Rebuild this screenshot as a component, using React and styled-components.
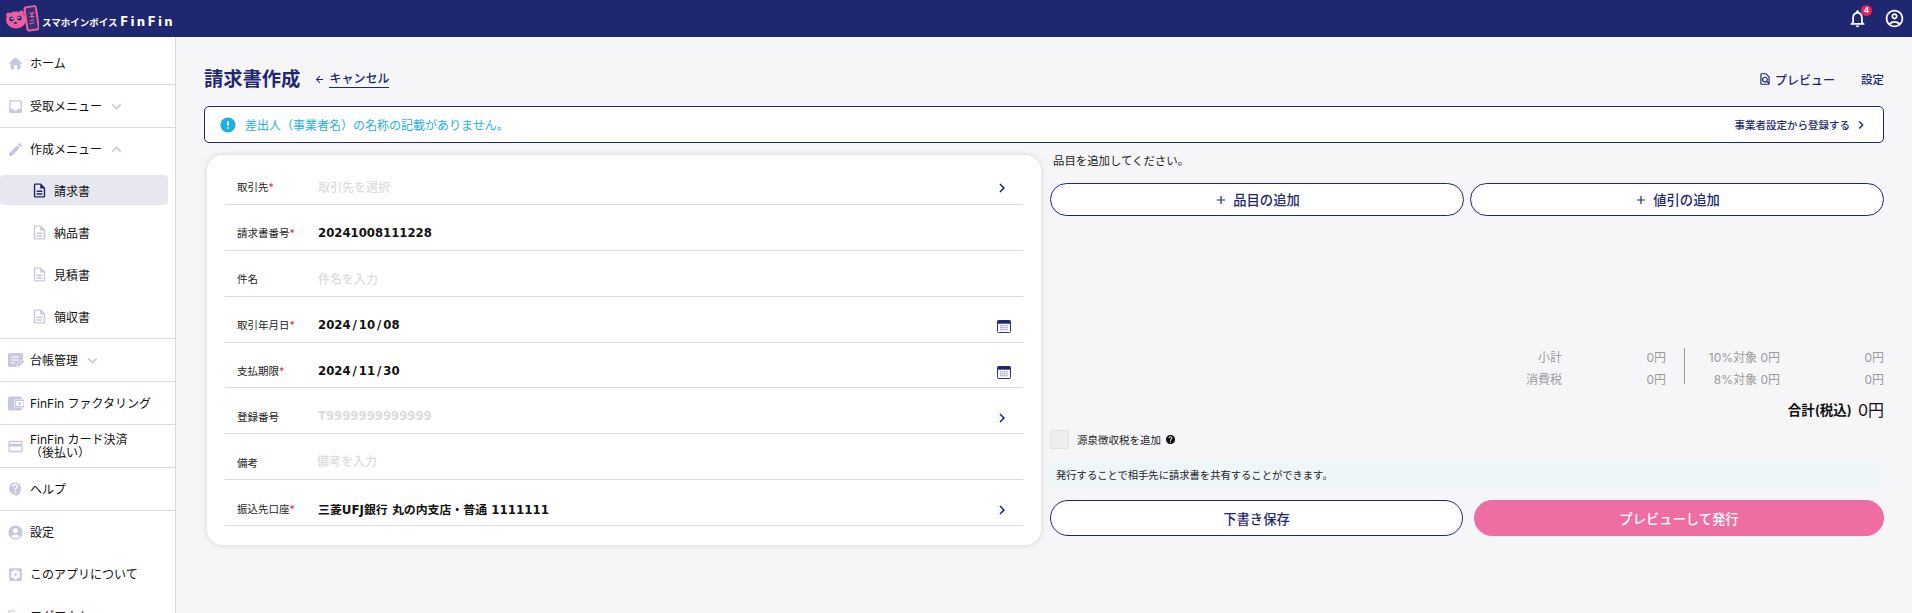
import styled, { createGlobalStyle } from "styled-components";
import {
  MdHome,
  MdInbox,
  MdEdit,
  MdOutlineDescription,
  MdCreditCard,
  MdHelp,
  MdContactSupport,
  MdAccountCircle,
  MdSettingsApplications,
  MdLogout,
  MdNotificationsNone,
  MdOutlineAccountCircle,
  MdKeyboardArrowDown,
  MdKeyboardArrowUp,
  MdChevronRight,
  MdArrowBack,
  MdError,
  MdOutlineFindInPage,
  MdAdd,
} from "react-icons/md";

const GlobalStyle = createGlobalStyle`
  html, body {
    margin: 0;
    height: 100%;
    overflow: hidden;
    background: #f6f6f9;
    font-family: Inter, "Noto Sans CJK JP", sans-serif;
    color: #111;
  }
  * { box-sizing: border-box; }
`;

const Page = styled.div`
  width: 1912px;
  height: 613px;
  overflow: hidden;
  display: flex;
  flex-direction: column;
`;

const TopBar = styled.header`
  height: 37px;
  flex: none;
  background: #1e2770;
  display: flex;
  align-items: center;
  justify-content: space-between;
  padding: 0 7px 0 6px;
  color: #fff;
`;

const Brand = styled.div`
  display: flex;
  align-items: center;
`;

const BrandKana = styled.span`
  font-size: 9.5px;
  font-weight: 700;
  margin: 6px 0 0 3px;
  letter-spacing: 0;
`;

const BrandName = styled.span`
  font-size: 12.5px;
  font-weight: 800;
  letter-spacing: 2.9px;
  margin: 6px 0 0 3px;
`;

const TopIcons = styled.div`
  display: flex;
  align-items: center;
  gap: 14px;
  font-size: 21px;
`;

const Bell = styled.div`
  position: relative;
  display: flex;
  margin-right: 2px;
`;

const BellBadge = styled.span`
  position: absolute;
  top: -3px;
  right: -4px;
  width: 11px;
  height: 11px;
  border-radius: 50%;
  background: #f01d55;
  font-size: 8px;
  font-weight: 700;
  line-height: 11px;
  text-align: center;
`;

const Body = styled.div`
  flex: 1;
  display: flex;
  min-height: 0;
`;

const Sidebar = styled.nav`
  width: 176px;
  flex: none;
  background: #fff;
  border-right: 1px solid #d9d9de;
  padding-top: 5px;
`;

const MenuRow = styled.div`
  height: ${(p) => (p.$divider ? 43 : 42)}px;
  display: flex;
  align-items: center;
  padding-left: 7px;
  gap: 6px;
  font-size: 12px;
  line-height: 13px;
  border-bottom: ${(p) => (p.$divider ? "1px solid #dcdce0" : "none")};
  color: #111;

  svg {
    color: #c6c8de;
    font-size: 17px;
    flex: none;
  }
`;

const Caret = styled.span`
  display: flex;
  margin-left: -1px;

  svg {
    font-size: 19px;
  }
`;

const SubRow = styled.div`
  height: 42px;
  padding: 5px 7px 7px 0;
`;

const SubInner = styled.div`
  height: 30px;
  display: flex;
  align-items: center;
  padding-left: 31px;
  gap: 6px;
  font-size: 12px;
  border-radius: 4px;
  background: ${(p) => (p.$active ? "#e6e7f0" : "transparent")};

  svg {
    font-size: 17px;
    color: ${(p) => (p.$active ? "#1e2770" : "#c6c8de")};
    flex: none;
  }
`;

const SideRule = styled.div`
  border-bottom: 1px solid #dcdce0;
`;

const Main = styled.main`
  flex: 1;
  padding: 19px 28px 0 28px;
  min-width: 0;
`;

const Head = styled.div`
  display: flex;
  align-items: center;
  height: 46px;
  margin-bottom: 4px;
  color: #1e2770;
`;

const Title = styled.h1`
  margin: 0;
  font-size: 19.3px;
  font-weight: 700;
  line-height: 28px;
`;

const Cancel = styled.div`
  display: flex;
  align-items: center;
  margin-left: 14px;
  font-size: 12px;
  font-weight: 500;

  svg {
    font-size: 11px;
    margin-right: 4px;
  }

  span {
    border-bottom: 1px solid #1e2770;
    line-height: 17px;
  }
`;

const HeadActions = styled.div`
  margin-left: auto;
  display: flex;
  align-items: center;
  font-size: 11.5px;
  font-weight: 500;
  gap: 26px;
`;

const PreviewLink = styled.div`
  display: flex;
  align-items: center;
  gap: 3px;
  font-size: 12px;

  svg {
    font-size: 14px;
  }
`;

const Alert = styled.div`
  height: 37px;
  border: 1px solid #1e2770;
  border-radius: 5px;
  background: #fff;
  display: flex;
  align-items: center;
  padding: 0 14px 0 14px;
  font-size: 12px;
  color: #1fb0e0;
`;

const AlertIcon = styled(MdError)`
  font-size: 18px;
  margin-right: 8px;
`;

const AlertLink = styled.div`
  margin-left: auto;
  display: flex;
  align-items: center;
  color: #1e2770;
  font-size: 10.5px;
  font-weight: 500;
  gap: 3px;

  svg {
    font-size: 16px;
  }
`;

const Columns = styled.div`
  display: flex;
  margin-top: 12px;
`;

const Card = styled.section`
  width: 834px;
  margin-left: 3px;
  flex: none;
  height: 390px;
  background: #fff;
  border-radius: 16px;
  box-shadow: 0 0 6px rgba(0, 0, 0, 0.13);
  padding: 4px 18px 0;
`;

const FormRow = styled.div`
  height: 45.9px;
  display: flex;
  align-items: center;
  border-bottom: 1px solid #dcdcdc;
  padding: 11px 12px 0 12px;
`;

const FieldLabel = styled.div`
  width: 81px;
  flex: none;
  font-size: 10.5px;
  color: #222;

  em {
    color: #f01d3c;
    font-style: normal;
  }
`;

const FieldValue = styled.div`
  flex: 1;
  font-family: "DejaVu Sans", "Noto Sans CJK JP", sans-serif;
  font-size: ${(p) => (p.$text ? 11.9 : 11.7)}px;
  font-weight: 700;
  color: #111;
`;

const DateSlash = styled.span`
  margin: 0 2px;
`;

const FieldPlaceholder = styled.div`
  flex: 1;
  font-family: ${(p) => (p.$latin ? '"DejaVu Sans", sans-serif' : "inherit")};
  font-size: ${(p) => (p.$latin ? 11.7 : 12)}px;
  font-weight: ${(p) => (p.$latin ? 700 : 500)};
  color: #dcdcdc;
  margin: ${(p) => (p.$raised ? "-4px 0 0 -1px" : "0")};
`;

const FieldIcon = styled.span`
  display: flex;
  color: #1e2770;
  margin-top: 3px;

  svg {
    font-size: 18px;
  }
`;

const Side = styled.div`
  flex: 1;
  margin-left: 9px;
  min-width: 0;
`;

const Hint = styled.p`
  margin: 0 0 0 3px;
  font-size: 11.4px;
  line-height: 13px;
  color: #222;
`;

const ButtonRow = styled.div`
  display: flex;
  gap: ${(p) => p.$gap}px;
  margin-top: ${(p) => p.$top}px;
`;

const PillButton = styled.button`
  flex: ${(p) => p.$flex || 1};
  height: ${(p) => p.$h}px;
  border-radius: 18px;
  border: 1px solid ${(p) => (p.$pink ? "#ee6ea4" : "#1e2770")};
  background: ${(p) => (p.$pink ? "#ee6ea4" : "#fff")};
  color: ${(p) => (p.$pink ? "#fff" : "#1e2770")};
  font-family: inherit;
  font-size: 13.3px;
  font-weight: 500;
  display: flex;
  align-items: center;
  justify-content: center;
  gap: 5px;
  padding: 0;
  min-width: 0;

  svg {
    font-size: 14px;
  }
`;

const Summary = styled.div`
  display: flex;
  justify-content: flex-end;
  margin-top: 129px;
  font-size: 12px;
  color: #9a9a9a;
`;

const SummaryGrid = styled.div`
  display: grid;
  grid-template-columns: ${(p) => p.$cols};
  grid-auto-rows: 22px;
  align-items: center;
  text-align: right;
`;

const SummaryRule = styled.div`
  width: 1px;
  height: 36px;
  background: #9a9a9a;
  margin: 3px 0 0 18px;
`;

const Total = styled.div`
  display: flex;
  justify-content: flex-end;
  align-items: center;
  gap: 6px;
  height: 24px;
  margin-top: 8px;
  font-size: 13.5px;
  font-weight: 600;
  color: #111;

  span {
    font-size: 16px;
    font-weight: 400;
  }
`;

const CheckRow = styled.label`
  display: flex;
  align-items: center;
  margin-top: 9px;
  font-size: 10.5px;
  color: #222;
`;

const CheckBox = styled.span`
  width: 19px;
  height: 19px;
  background: #eeeeee;
  border: 1px solid #e2e2e2;
  border-radius: 2px;
  margin-right: 8px;
`;

const HelpDot = styled(MdHelp)`
  font-size: 11px;
  color: #111;
  margin-left: 4px;
`;

const InfoBox = styled.div`
  height: 25px;
  margin-top: 13px;
  background: #eff6fa;
  padding: 0 6px;
  display: flex;
  align-items: center;
  font-size: 10.3px;
  color: #222;
`;

function LedgerIcon() {
  return (
    <svg width="17" height="17" viewBox="0 0 17 17">
      <path d="M2.5 1h12a1.5 1.5 0 0 1 1.5 1.5V8l-6 7H2.5A1.5 1.5 0 0 1 1 13.5v-11A1.5 1.5 0 0 1 2.5 1z" fill="currentColor" />
      <path d="M4 5h8M4 8h8M4 11h4" stroke="#fff" strokeWidth="1.2" />
      <path d="M9.5 15.5l.5-2.5 5.5-5.5 2 2-5.5 5.5z" fill="currentColor" stroke="#fff" strokeWidth=".8" />
    </svg>
  );
}

function WalletIcon() {
  return (
    <svg width="17" height="17" viewBox="0 0 17 17">
      <path d="M2.5 1.5h11a1.5 1.5 0 0 1 1.5 1.5v1H9a2 2 0 0 0-2 2v5a2 2 0 0 0 2 2h6v1a1.5 1.5 0 0 1-1.5 1.5h-11A1.5 1.5 0 0 1 1 14V3a1.5 1.5 0 0 1 1.5-1.5z" fill="currentColor" />
      <path d="M8.5 5.2H17v6.6H8.5z" fill="none" stroke="currentColor" strokeWidth="1.4" />
      <rect x="11.2" y="7.2" width="2.6" height="2.6" fill="currentColor" />
    </svg>
  );
}

function CalendarIcon() {
  return (
    <svg width="14" height="13" viewBox="0 0 14 13">
      <rect x="0.5" y="0.5" width="13" height="12" rx="1" fill="#fff" stroke="#2c3480" />
      <rect x="0.5" y="0.5" width="13" height="3.2" fill="#1e2770" />
      <path d="M3 5.8h8M3 7.8h8M3 9.8h8" stroke="#7d82b4" strokeWidth="1.1" strokeDasharray="1.4 .7" />
    </svg>
  );
}

const menuAfter = [
  { icon: LedgerIcon, label: "台帳管理", caret: true },
  { icon: WalletIcon, label: "FinFin ファクタリング" },
  { icon: MdCreditCard, label: <>FinFin カード決済<br />（後払い）</> },
  { icon: MdContactSupport, label: "ヘルプ" },
];

const fields = [
  { label: "取引先", required: true, placeholder: "取引先を選択", icon: "chevron" },
  { label: "請求書番号", required: true, value: "20241008111228" },
  { label: "件名", placeholder: "件名を入力" },
  { label: "取引年月日", required: true, value: "2024/10/08", icon: "calendar" },
  { label: "支払期限", required: true, value: "2024/11/30", icon: "calendar" },
  { label: "登録番号", placeholder: "T9999999999999", latin: true, icon: "chevron" },
  { label: "備考", placeholder: "備考を入力", raised: true },
  { label: "振込先口座", required: true, value: "三菱UFJ銀行 丸の内支店・普通 1111111", text: true, icon: "chevron" },
];

function Logo() {
  return (
    <svg width="33" height="30" viewBox="0 0 33 30">
      <circle cx="2.5" cy="11" r="2.4" fill="#ee5f9d" />
      <circle cx="15.5" cy="9" r="2.4" fill="#ee5f9d" />
      <ellipse cx="10" cy="16" rx="10" ry="8.5" fill="#ee5f9d" />
      <ellipse cx="5.5" cy="15" rx="2.2" ry="2.6" fill="#1e2770" />
      <ellipse cx="13.5" cy="14" rx="2.2" ry="2.6" fill="#1e2770" />
      <circle cx="6" cy="14.6" r=".8" fill="#fff" />
      <circle cx="13" cy="13.6" r=".8" fill="#fff" />
      <ellipse cx="9.5" cy="19" rx="1.6" ry="1.1" fill="#1e2770" />
      <rect x="20" y="2.5" width="11.5" height="23.5" rx="2" fill="#3b2f78" stroke="#ee5f9d" strokeWidth="2" transform="rotate(-8 26 15)" />
      <path d="M24 8l1.5 2.5L28 8M26 10.5v4M23.5 12.5h5M23.5 20l5-1.5M24 17l4-1" stroke="#ee5f9d" strokeWidth="1.1" fill="none" />
    </svg>
  );
}

// 日付の「/」だけ幅が広いので余白を足す
function FieldText({ value }) {
  if (!value.includes("/")) return value;
  return value.split("/").map((part, i) => (
    <span key={i}>
      {i > 0 && <DateSlash>/</DateSlash>}
      {part}
    </span>
  ));
}

export default function App() {
  return (
    <Page>
      <GlobalStyle />
      <TopBar>
        <Brand>
          <Logo />
          <BrandKana>スマホインボイス</BrandKana>
          <BrandName>FinFin</BrandName>
        </Brand>
        <TopIcons>
          <Bell>
            <MdNotificationsNone />
            <BellBadge>4</BellBadge>
          </Bell>
          <MdOutlineAccountCircle />
        </TopIcons>
      </TopBar>
      <Body>
        <Sidebar>
          <MenuRow $divider><MdHome />ホーム</MenuRow>
          <MenuRow $divider>
            <MdInbox />受取メニュー
            <Caret><MdKeyboardArrowDown /></Caret>
          </MenuRow>
          <MenuRow>
            <MdEdit />作成メニュー
            <Caret><MdKeyboardArrowUp /></Caret>
          </MenuRow>
          <SubRow><SubInner $active><MdOutlineDescription />請求書</SubInner></SubRow>
          <SubRow><SubInner><MdOutlineDescription />納品書</SubInner></SubRow>
          <SubRow><SubInner><MdOutlineDescription />見積書</SubInner></SubRow>
          <SubRow><SubInner><MdOutlineDescription />領収書</SubInner></SubRow>
          <SideRule />
          {menuAfter.map((m, i) => (
            <MenuRow key={i} $divider>
              <m.icon />
              <span>{m.label}</span>
              {m.caret && <Caret><MdKeyboardArrowDown /></Caret>}
            </MenuRow>
          ))}
          <MenuRow><MdAccountCircle />設定</MenuRow>
          <MenuRow><MdSettingsApplications />このアプリについて</MenuRow>
          <MenuRow><MdLogout />ログアウト</MenuRow>
        </Sidebar>
        <Main>
          <Head>
            <Title>請求書作成</Title>
            <Cancel>
              <MdArrowBack />
              <span>キャンセル</span>
            </Cancel>
            <HeadActions>
              <PreviewLink>
                <MdOutlineFindInPage />
                プレビュー
              </PreviewLink>
              <div>設定</div>
            </HeadActions>
          </Head>
          <Alert>
            <AlertIcon />
            差出人（事業者名）の名称の記載がありません。
            <AlertLink>
              事業者設定から登録する
              <MdChevronRight />
            </AlertLink>
          </Alert>
          <Columns>
            <Card>
              {fields.map((f) => (
                <FormRow key={f.label}>
                  <FieldLabel>
                    {f.label}
                    {f.required && <em>*</em>}
                  </FieldLabel>
                  {f.value ? (
                    <FieldValue $text={f.text}><FieldText value={f.value} /></FieldValue>
                  ) : (
                    <FieldPlaceholder $latin={f.latin} $raised={f.raised}>{f.placeholder}</FieldPlaceholder>
                  )}
                  {f.icon === "chevron" && (
                    <FieldIcon><MdChevronRight /></FieldIcon>
                  )}
                  {f.icon === "calendar" && (
                    <FieldIcon><CalendarIcon /></FieldIcon>
                  )}
                </FormRow>
              ))}
            </Card>
            <Side>
              <Hint>品目を追加してください。</Hint>
              <ButtonRow $gap={6} $top={15}>
                <PillButton $h={33}><MdAdd />品目の追加</PillButton>
                <PillButton $h={33}><MdAdd />値引の追加</PillButton>
              </ButtonRow>
              <Summary>
                <SummaryGrid $cols="60px 104px">
                  <div>小計</div><div>0円</div>
                  <div>消費税</div><div>0円</div>
                </SummaryGrid>
                <SummaryRule />
                <SummaryGrid $cols="95px 104px">
                  <div>10%対象 0円</div><div>0円</div>
                  <div>8%対象 0円</div><div>0円</div>
                </SummaryGrid>
              </Summary>
              <Total>合計(税込)<span>0円</span></Total>
              <CheckRow>
                <CheckBox />
                源泉徴収税を追加
                <HelpDot />
              </CheckRow>
              <InfoBox>発行することで相手先に請求書を共有することができます。</InfoBox>
              <ButtonRow $gap={11} $top={13}>
                <PillButton $h={36} $flex={413}>下書き保存</PillButton>
                <PillButton $h={36} $flex={410} $pink>プレビューして発行</PillButton>
              </ButtonRow>
            </Side>
          </Columns>
        </Main>
      </Body>
    </Page>
  );
}
